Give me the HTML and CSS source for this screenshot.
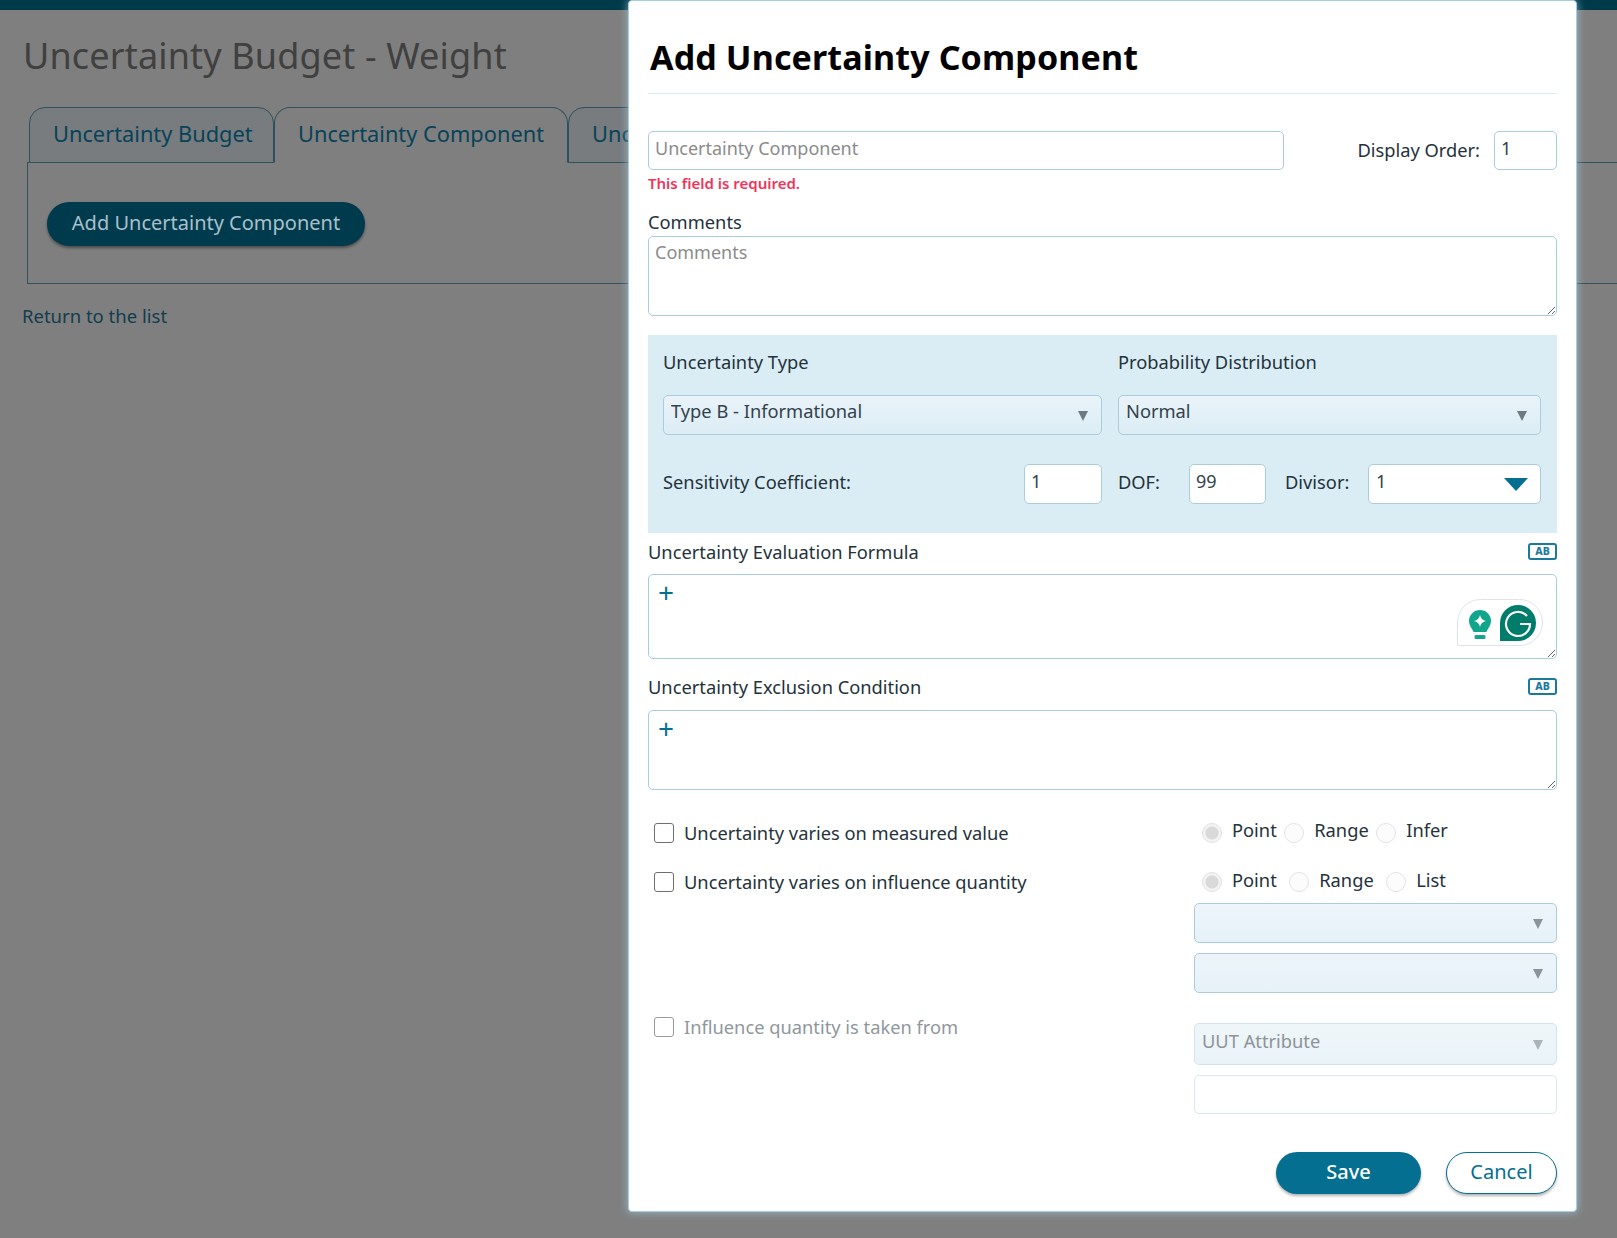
FILE: index.html
```html
<!DOCTYPE html>
<html lang="en">
<head>
<meta charset="utf-8">
<title>Uncertainty Budget - Weight</title>
<link rel="stylesheet" href="styles.css">
</head>
<body>
<div class="topbar"></div>
<main class="page">
  <h1 class="page-title">Uncertainty Budget - Weight</h1>
  <div class="tabs">
    <div class="tab">Uncertainty Budget</div>
    <div class="tab tab-active">Uncertainty Component</div>
    <div class="tab">Uncertainty Source</div>
  </div>
  <div class="tab-panel">
    <button class="btn-dark" type="button">Add Uncertainty Component</button>
  </div>
  <a class="back-link">Return to the list</a>
</main>
<div class="backdrop"></div>
<section class="modal">
  <header class="modal-head"><h2>Add Uncertainty Component</h2></header>

  <div class="row-name">
    <input class="field field-name" type="text" placeholder="Uncertainty Component">
    <label class="order-label">Display Order:</label>
    <input class="field field-order" type="text" value="1">
  </div>
  <p class="error">This field is required.</p>

  <label class="label label-comments">Comments</label>
  <textarea class="field area area-comments" placeholder="Comments"></textarea>

  <div class="panel">
    <div class="panel-labels">
      <span class="col-left">Uncertainty Type</span>
      <span class="col-right">Probability Distribution</span>
    </div>
    <div class="panel-selects">
      <div class="sel col-left"><select><option>Type B - Informational</option></select></div>
      <div class="sel col-right"><select><option>Normal</option></select></div>
    </div>
    <div class="panel-nums">
      <div class="col-left num-group">
        <span>Sensitivity Coefficient:</span>
        <input class="field field-sens" type="text" value="1">
      </div>
      <div class="col-right num-group">
        <span class="lbl-dof">DOF:</span>
        <input class="field field-dof" type="text" value="99">
        <span class="lbl-div">Divisor:</span>
        <div class="divisor"><span>1</span><i class="big-caret"></i></div>
      </div>
    </div>
  </div>

  <div class="label-row label-row-first">
    <span>Uncertainty Evaluation Formula</span>
    <span class="ab">AB</span>
  </div>
  <div class="area-wrap">
    <textarea class="field area area-formula"></textarea>
    <span class="plus">+</span>
    <div class="grammarly">
      <svg class="bulb" width="24" height="30" viewBox="0 0 24 30"><path d="M12 0a11 11 0 0 1 11 11c0 4.500-3 7-4.500 11h-13C4 18 1 15.500 1 11A11 11 0 0 1 12 0z" fill="#11a68c"/><path d="M12 5c.8 3.500 2.500 5.200 6 6-3.500.8-5.200 2.500-6 6-.8-3.500-2.500-5.200-6-6 3.500-.8 5.200-2.500 6-6z" fill="#fff"/><rect x="6.500" y="25" width="11" height="4" rx="1.500" fill="#11a68c"/></svg>
      <svg width="36" height="36" viewBox="0 0 36 36"><path d="M18 0a18 18 0 0 1 0 36H0V18A18 18 0 0 1 18 0z" fill="#007d6a"/><path d="M27 11a12 12 0 1 0 3 8H20" fill="none" stroke="#fff" stroke-width="2.200"/></svg>
    </div>
  </div>

  <div class="label-row">
    <span>Uncertainty Exclusion Condition</span>
    <span class="ab">AB</span>
  </div>
  <div class="area-wrap">
    <textarea class="field area area-exclusion"></textarea>
    <span class="plus">+</span>
  </div>

  <div class="options">
    <div class="opt-row opt-row-1">
      <label class="check"><input type="checkbox"><span>Uncertainty varies on measured value</span></label>
      <div class="radios">
        <input type="radio" checked disabled><span>Point</span>
        <input class="r-narrow" type="radio" disabled><span>Range</span>
        <input class="r-narrow" type="radio" disabled><span>Infer</span>
      </div>
    </div>
    <div class="opt-row opt-row-2">
      <label class="check"><input type="checkbox"><span>Uncertainty varies on influence quantity</span></label>
      <div class="radios">
        <input type="radio" checked disabled><span>Point</span>
        <input class="r-wide" type="radio" disabled><span>Range</span>
        <input class="r-wide" type="radio" disabled><span>List</span>
      </div>
    </div>
    <div class="stack stack-a">
      <div class="sel sel-wide"><select disabled><option></option></select></div>
      <div class="sel sel-wide"><select disabled><option></option></select></div>
    </div>
    <div class="opt-row opt-row-3">
      <label class="check check-off"><input type="checkbox" disabled><span>Influence quantity is taken from</span></label>
      <div class="stack stack-b">
        <div class="sel sel-wide sel-off"><select disabled><option>UUT Attribute</option></select></div>
        <input class="field field-off" type="text" disabled>
      </div>
    </div>
  </div>

  <footer class="actions">
    <button class="btn-save" type="button">Save</button>
    <button class="btn-cancel" type="button">Cancel</button>
  </footer>
</section>
</body>
</html>
```
FILE: styles.css
```css
* { box-sizing: border-box; }
html, body { margin: 0; height: 100%; }
body {
  width: 1617px;
  height: 1238px;
  overflow: hidden;
  background: #fff;
  font-family: "Noto Sans", "Open Sans", sans-serif;
  font-size: 18.300px;
  color: #24323b;
  position: relative;
}
.topbar { height: 10px; background: #007494; }

.page { padding: 0 0 0 27px; }
.page-title {
  margin: 19px 0 0 -4px;
  height: 53px;
  line-height: 53px;
  font-size: 36px;
  letter-spacing: .15px;
  font-weight: 400;
  color: #808080;
}
.tabs { display: flex; margin: 25px 0 0 2px; height: 56px; }
.tab {
  height: 56px;
  padding: 0 23px 3px;
  display: flex;
  align-items: center;
  font-size: 21.800px;
  color: #0f86b0;
  background: #f0f8ff;
  border: 1px solid #5aa3bd;
  border-radius: 16px 16px 0 0;
  white-space: nowrap;
}
.tab-active { background: #fff; border-bottom-color: #fff; width: 294px; }
.tab:first-child { width: 245px; }
.tab-panel {
  height: 122px;
  margin-top: -1px;
  border: 1px solid #5aa3bd;
  border-right: 0;
  padding: 39px 0 0 19px;
}
.btn-dark {
  position: relative;
  z-index: 1;
  width: 318px;
  height: 44px;
  border: 0;
  border-radius: 22px;
  background: #003a4d;
  color: #a9c0ca;
  font: 20px "Noto Sans", sans-serif;
  box-shadow: 0 2px 3px rgba(0,0,0,.4);
  padding: 0 0 4px;
}
.back-link { display: block; margin: 21px 0 0 -5px; font-size: 18.500px; color: #2a7a9a; line-height: 22px; }

.backdrop { position: absolute; inset: 0; background: rgba(0,0,0,.5); }

.modal {
  position: absolute;
  z-index: 2;
  left: 628px;
  top: 0;
  width: 949px;
  height: 1212px;
  padding: 0 19px;
  background: #fff;
  border: 1px solid #a5cfe0;
  border-radius: 4px;
  box-shadow: 0 0 8px rgba(170,215,235,.7);
}
.modal-head { height: 93px; border-bottom: 1px solid #daedf5; padding: 29px 0 0 2px; }
.modal-head h2 { margin: 0; font-size: 34px; letter-spacing: .13px; line-height: 55px; font-weight: 700; color: #000; }

.field {
  border: 1.500px solid #a9cddd;
  border-radius: 5px;
  background: #fff;
  font: 18px "Noto Sans", sans-serif;
  color: #33424c;
  padding: 0 6px 6px;
  outline: 0;
}
.field::placeholder { color: #8b8b8b; opacity: 1; }

.row-name { display: flex; align-items: center; margin-top: 37px; height: 39px; }
.field-name { width: 636px; height: 39px; }
.order-label { margin-left: auto; margin-right: 14px; margin-bottom: 2px; }
.field-order { width: 63px; height: 39px; }
.error { margin: 3px 0 0; height: 21px; line-height: 20px; font-size: 15px; font-weight: 600; color: #f0345a; }

.label { display: block; }
.label-comments { margin-top: 16px; line-height: 23px; height: 26px; }
.area { display: block; width: 100%; resize: vertical; padding-top: 3px; }
.area-comments { height: 80px; }

.panel { margin-top: 19px; height: 198px; padding: 0 15px; background: #daedf5; }
.panel-labels, .panel-selects, .panel-nums { display: flex; gap: 16px; }
.panel-labels { height: 56px; align-items: center; padding-bottom: 4px; }
.col-left { width: 439px; flex: none; }
.col-right { width: 423px; flex: none; }
.panel-selects { height: 40px; margin-top: 4px; }
.panel-nums { margin-top: 29px; height: 40px; align-items: center; }
.num-group { display: flex; align-items: center; }
.num-group > span { margin-bottom: 5px; }
.num-group .field { height: 40px; }
.field-sens { width: 78px; margin-left: auto; }
.lbl-dof { width: 71px; }
.field-dof { width: 77px; }
.lbl-div { margin-left: 19px; }
.divisor {
  position: relative;
  margin-left: auto;
  width: 173px;
  height: 40px;
  padding: 0 7px 6px;
  display: flex;
  align-items: center;
  font-size: 18px;
  color: #33424c;
  background: #fff;
  border: 1.500px solid #a9cddd;
  border-radius: 5px;
}
.big-caret {
  position: absolute;
  right: 12px;
  top: 13px;
  border-left: 12px solid transparent;
  border-right: 12px solid transparent;
  border-top: 13px solid #046f91;
}

.sel { position: relative; height: 40px; }
.sel::after {
  content: "";
  position: absolute;
  right: 14px;
  top: 16px;
  border-left: 5px solid transparent;
  border-right: 5px solid transparent;
  border-top: 10px solid #6e7a80;
  pointer-events: none;
}
.sel select {
  appearance: none;
  width: 100%;
  height: 100%;
  border: 1.500px solid #a9cddd;
  border-radius: 5px;
  background: linear-gradient(#e9f3f9, #dcedf5);
  font: 18.300px "Noto Sans", sans-serif;
  color: #33424c;
  padding: 0 7px 9px;
  opacity: 1;
}
.sel-wide { width: 363px; }
.sel-wide select { background: linear-gradient(#edf5fa, #e6f1f8); }
.sel-wide::after { border-top-color: #8a9499; }
.sel-off select { border-color: #cfe4ee; color: #8d9397; background: linear-gradient(#eff6fa, #e9f3f8); padding-bottom: 7px; }
.sel-off { height: 42px; }
.sel-off::after { border-top-color: #a9b3b8; top: 17px; }

.label-row { display: flex; justify-content: space-between; align-items: center; height: 27px; margin: 14px 0 10px; }
.label-row-first { margin: 6px 0 8px; padding-bottom: 2px; }
.ab {
  width: 29px;
  height: 17px;
  border: 2.500px solid #1a7a9e;
  border-radius: 3px;
  font-size: 10.500px;
  font-weight: 800;
  line-height: 12px;
  color: #1a7a9e;
  text-align: center;
}
.area-wrap { position: relative; }
.area-formula { height: 85px; }
.area-exclusion { height: 80px; }
.plus { position: absolute; left: 10px; top: 1px; font-size: 28px; line-height: 34px; color: #046f91; }
.grammarly {
  position: absolute;
  right: 14px;
  top: 25px;
  width: 86px;
  height: 47px;
  padding: 5px 0 0 10px;
  display: flex;
  gap: 8px;
  background: #fff;
  border: 1px solid #dfe3ee;
  border-radius: 24px 24px 24px 0;
}
.bulb { margin-top: 5px; }

.options { margin-top: 23px; }
.opt-row { display: flex; justify-content: space-between; }
.check { display: flex; align-items: center; gap: 10px; margin-left: 6px; height: 40px; }
.check span { margin-bottom: 2px; }
.check input {
  appearance: none;
  margin: 0;
  width: 20px;
  height: 20px;
  border: 1.500px solid #6f6f6f;
  border-radius: 3px;
  background: #fff;
}
.check-off { color: #8f979c; }
.check-off input { border-color: #9a9a9a; }
.radios { width: 363px; display: flex; align-items: center; height: 40px; padding-left: 8px; }
.radios span { margin: 0 0 6px 10px; }
.opt-row-1 .radios span { margin-bottom: 8px; }
.radios input {
  appearance: none;
  margin: 0;
  width: 20px;
  height: 20px;
  flex: none;
  border: 1.500px solid #e3e3e3;
  border-radius: 50%;
  background: #fcfcfc;
}
.radios input:checked { background: radial-gradient(circle, #d9d9d9 0 6px, #f3f3f3 7px); }
.radios .r-narrow { margin-left: 7.500px; }
.radios .r-wide { margin-left: 12.500px; }
.opt-row-1 { height: 40px; }
.opt-row-2 { height: 40px; margin-top: 9px; }
.stack { width: 363px; display: flex; flex-direction: column; gap: 10px; }
.stack-a { margin: 1px 0 0 auto; }
.opt-row-3 { margin-top: 30px; align-items: flex-start; }
.opt-row-3 .check { height: 20px; margin-top: -6px; }
.field-off { width: 363px; height: 39px; border-color: #d8e9f1; }

.actions { display: flex; justify-content: flex-end; gap: 25px; margin-top: 38px; }
.btn-save, .btn-cancel { height: 42px; border-radius: 21px; font: 20px "Noto Sans", sans-serif; padding: 0 0 3px; box-shadow: 0 2px 3px rgba(0,0,0,.3); }
.btn-save { width: 145px; background: #046f91; color: #fff; border: 0; font-weight: 500; }
.btn-cancel { width: 111px; background: #fff; color: #046f91; border: 1.500px solid #046f91; }
```
